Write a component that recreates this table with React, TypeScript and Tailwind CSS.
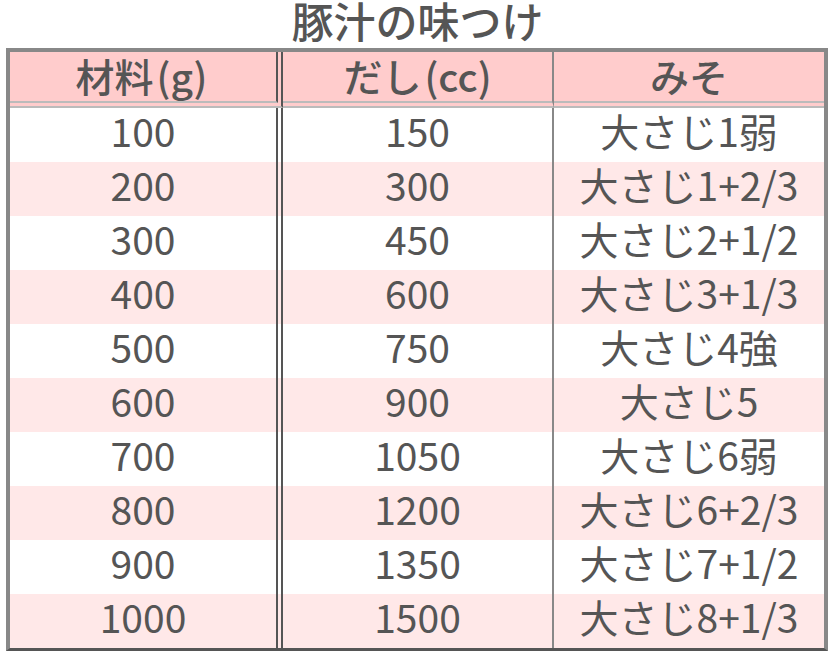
import React from "react";

const rows: [string, string, string][] = [
  ["100", "150", "大さじ1弱"],
  ["200", "300", "大さじ1+2/3"],
  ["300", "450", "大さじ2+1/2"],
  ["400", "600", "大さじ3+1/3"],
  ["500", "750", "大さじ4強"],
  ["600", "900", "大さじ5"],
  ["700", "1050", "大さじ6弱"],
  ["800", "1200", "大さじ6+2/3"],
  ["900", "1350", "大さじ7+1/2"],
  ["1000", "1500", "大さじ8+1/3"],
];

export default function App() {
  return (
    <div
      className="w-[835px] h-[658px] bg-white text-[#555555] flex flex-col"
      style={{ fontFamily: '"Noto Sans CJK JP", "Noto Sans", sans-serif' }}
    >
      <h1 className="h-[48px] text-[42px] leading-[40px] font-medium text-center">豚汁の味つけ</h1>
      <div className="mx-[6px] w-[822px] border-[4px] border-[#888888] border-b-[3px] border-b-[#555555]">
        <div className="grid grid-cols-[273px_271px_270px] h-[56px] bg-[#ffcccc] text-[39px] leading-[42px] font-medium">
          <div className="flex items-center justify-center pb-[3px] border-r-[7px] border-double border-r-[#555555] border-b-[7px] border-b-[#bbbbbb]">
            材料<span className="px-[3px]">(g)</span>
          </div>
          <div className="flex items-center justify-center pb-[3px] border-r-2 border-r-[#888888] border-b-[7px] border-double border-b-[#bbbbbb]">
            だし<span className="pl-[3px]">(cc)</span>
          </div>
          <div className="flex items-center justify-center pb-[3px] border-b-[7px] border-double border-b-[#bbbbbb]">
            みそ
          </div>
        </div>
        {rows.map((r, i) => (
          <div
            key={i}
            className={
              "grid grid-cols-[273px_271px_270px] h-[54px] text-[39px] leading-[44px] " +
              (i % 2 === 1 ? "bg-[#ffe8e8]" : "bg-white")
            }
          >
            <div className="text-center border-r-[7px] border-double border-r-[#555555]">{r[0]}</div>
            <div className="text-center border-r-2 border-r-[#888888]">{r[1]}</div>
            <div className="text-center">{r[2]}</div>
          </div>
        ))}
      </div>
    </div>
  );
}
